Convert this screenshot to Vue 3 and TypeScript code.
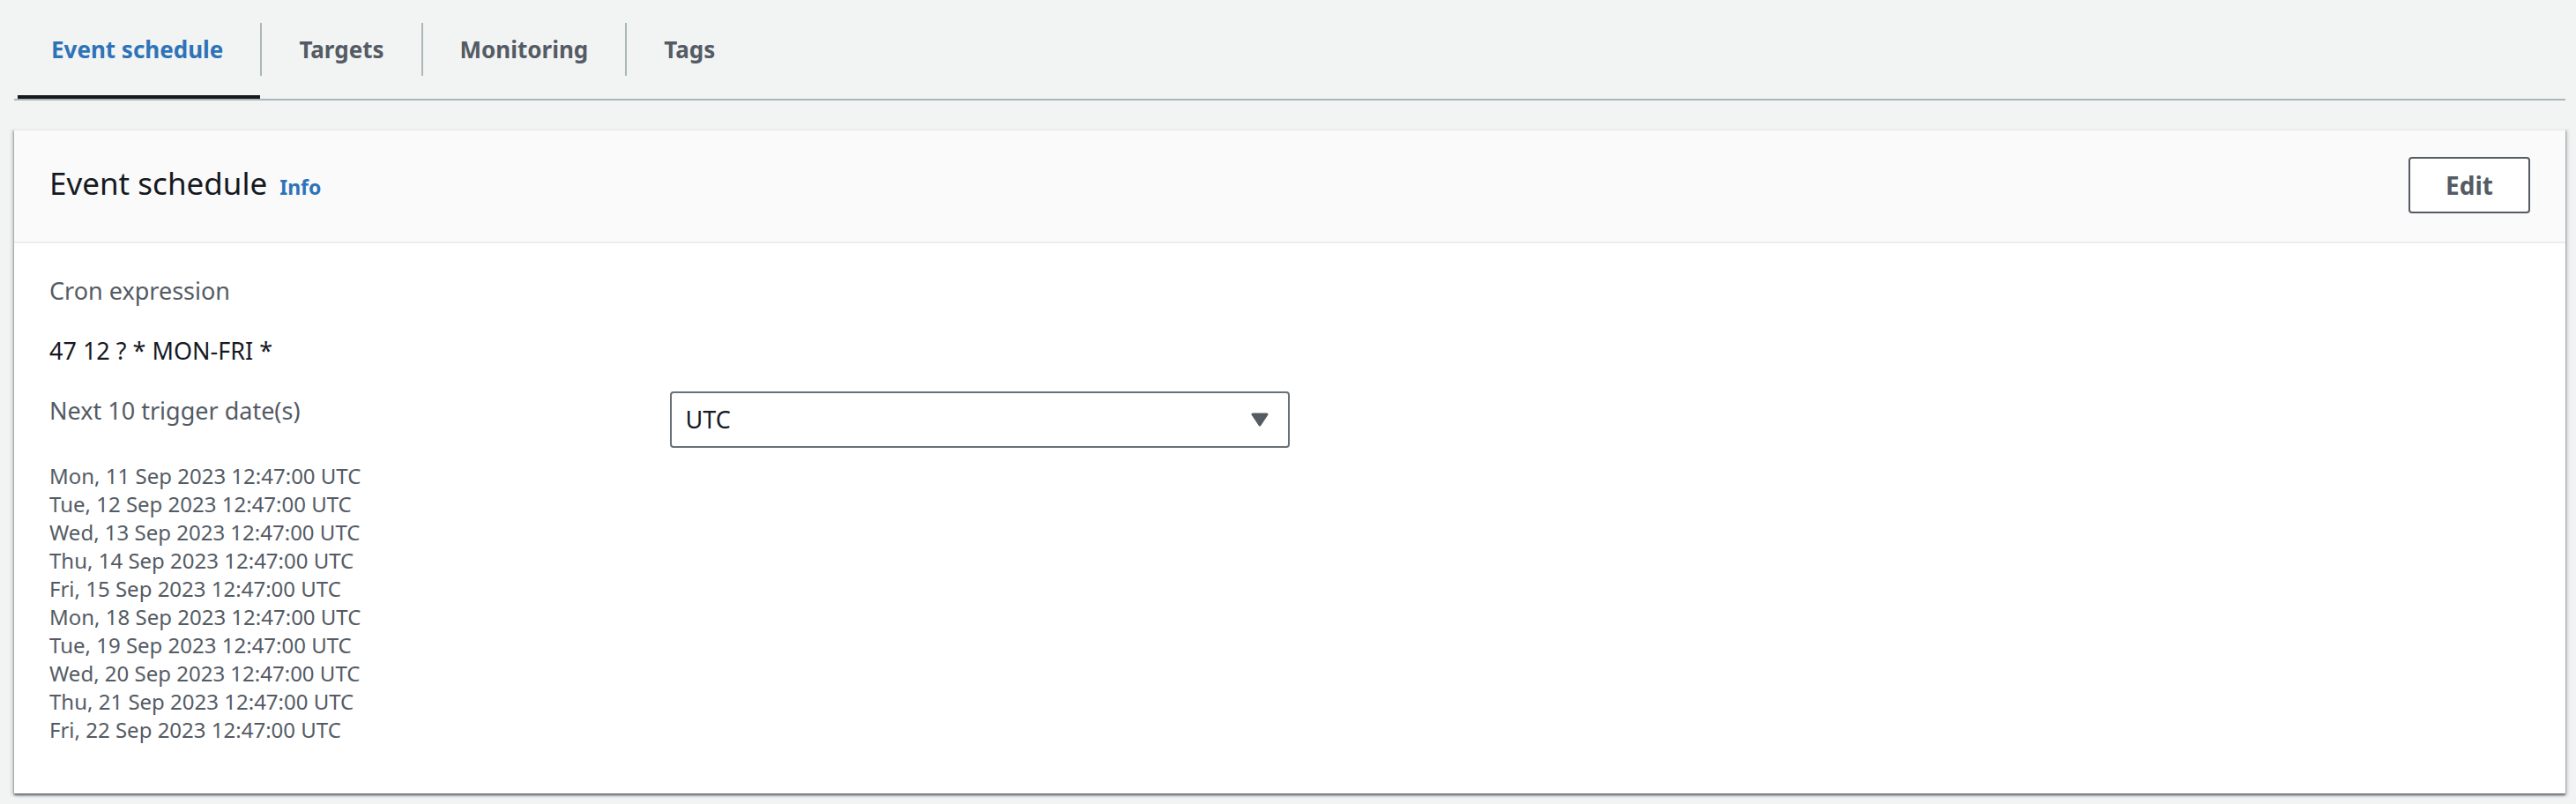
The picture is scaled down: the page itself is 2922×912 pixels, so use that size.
<script setup lang="ts">
import { ref } from 'vue'

interface Tab {
  id: string
  label: string
}

const tabs: Tab[] = [
  { id: 'schedule', label: 'Event schedule' },
  { id: 'targets', label: 'Targets' },
  { id: 'monitoring', label: 'Monitoring' },
  { id: 'tags', label: 'Tags' },
]

const activeTab = ref<string>('schedule')
const timezone = ref<string>('UTC')
const cronExpression = '47 12 ? * MON-FRI *'

const triggerDates: string[] = [
  'Mon, 11 Sep 2023 12:47:00 UTC',
  'Tue, 12 Sep 2023 12:47:00 UTC',
  'Wed, 13 Sep 2023 12:47:00 UTC',
  'Thu, 14 Sep 2023 12:47:00 UTC',
  'Fri, 15 Sep 2023 12:47:00 UTC',
  'Mon, 18 Sep 2023 12:47:00 UTC',
  'Tue, 19 Sep 2023 12:47:00 UTC',
  'Wed, 20 Sep 2023 12:47:00 UTC',
  'Thu, 21 Sep 2023 12:47:00 UTC',
  'Fri, 22 Sep 2023 12:47:00 UTC',
]
</script>

<template>
  <main class="page">
    <div class="tabs" role="tablist">
      <div v-for="tab in tabs" :key="tab.id" class="tab-item">
        <button
          type="button"
          role="tab"
          class="tab"
          :class="{ active: tab.id === activeTab }"
          :aria-selected="tab.id === activeTab"
          @click="activeTab = tab.id"
        >
          {{ tab.label }}
        </button>
      </div>
    </div>

    <section class="card">
      <header class="card-header">
        <div class="heading">
          <h2 class="title">Event schedule</h2>
          <a class="info" href="#info">Info</a>
        </div>
        <button type="button" class="edit">Edit</button>
      </header>

      <div class="card-body">
        <div class="label">Cron expression</div>
        <div class="value">{{ cronExpression }}</div>
        <div class="trigger-row">
          <label class="label" for="timezone">Next 10 trigger date(s)</label>
          <div class="select-box">
            <select id="timezone" v-model="timezone" class="select">
              <option value="UTC">UTC</option>
              <option value="Local">Local time zone</option>
            </select>
            <svg class="caret" viewBox="0 0 20 16" aria-hidden="true">
              <path d="M2 2H18L10 14Z" />
            </svg>
          </div>
        </div>
        <ul class="dates">
          <li v-for="date in triggerDates" :key="date">{{ date }}</li>
        </ul>
      </div>
    </section>
  </main>
</template>

<style>
body {
  background: #f2f3f3;
}
</style>

<style scoped>
.page {
  box-sizing: border-box;
  padding: 0 12px 12px 16px;
  font-family: 'Noto Sans', 'Open Sans', sans-serif;
  font-size: 27px;
  line-height: 44px;
  color: #16191f;
}

.tabs {
  display: flex;
  height: 112px;
  padding-left: 4px;
  border-bottom: 2px solid #aab7b8;
}

.tab-item {
  display: flex;
}

.tab-item:not(:last-child)::after {
  content: '';
  width: 2px;
  height: 60px;
  margin-top: 26px;
  background: #aab7b8;
}

.tab {
  padding: 4px 42px 0;
  border: 0;
  border-bottom: 4px solid transparent;
  background: none;
  color: #545b64;
  font: inherit;
  font-size: 26px;
  font-weight: 700;
  cursor: pointer;
}

.tab.active {
  padding-left: 38px;
  border-bottom-color: #16191f;
  color: #2e73b8;
}

.card {
  margin-top: 32px;
  border-top: 2px solid #eaeded;
  background: #fff;
  box-shadow: 0 2px 2px #687078, 2px 2px 4px rgba(0, 28, 36, 0.2), -2px 2px 4px rgba(0, 28, 36, 0.2);
  clip-path: inset(0 -8px -8px);
}

.card-header {
  display: flex;
  align-items: center;
  justify-content: space-between;
  padding: 30px 40px 32px;
  border-bottom: 2px solid #eaeded;
  background: #fafafa;
}

.heading {
  display: flex;
  align-items: baseline;
  gap: 14px;
}

.title {
  margin: 0;
  font-size: 35px;
  font-weight: 400;
}

.info {
  color: #2e73b8;
  font-size: 23px;
  font-weight: 700;
  text-decoration: none;
}

.edit {
  height: 64px;
  padding: 0 40px;
  border: 2px solid #545b64;
  border-radius: 4px;
  background: #fff;
  color: #545b64;
  font: inherit;
  font-size: 28px;
  font-weight: 700;
  cursor: pointer;
}

.card-body {
  display: flex;
  flex-direction: column;
  gap: 24px;
  padding: 32px 40px 56px;
}

.label {
  color: #545b64;
}

.trigger-row {
  display: grid;
  grid-template-columns: repeat(4, 1fr);
}

.select-box {
  display: grid;
  align-items: center;
}

.select,
.caret {
  grid-area: 1 / 1;
}

.select {
  width: 100%;
  height: 64px;
  padding: 0 60px 0 16px;
  border: 2px solid #687078;
  border-radius: 4px;
  background: #fff;
  color: #16191f;
  font: inherit;
  appearance: none;
}

.caret {
  justify-self: end;
  width: 20px;
  height: 16px;
  margin-right: 24px;
  fill: #545b64;
  stroke: #545b64;
  stroke-width: 3;
  stroke-linejoin: round;
  pointer-events: none;
}

.dates {
  margin: -8px 0 0;
  padding: 0;
  color: #545b64;
  font-size: 24px;
  line-height: 32px;
  list-style: none;
}
</style>
